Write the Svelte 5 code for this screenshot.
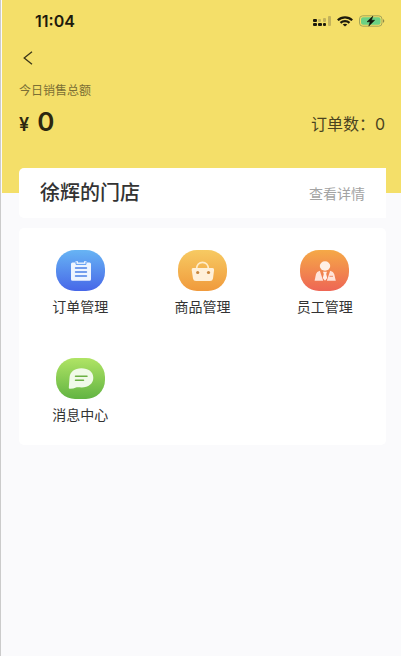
<script lang="ts">
    type Entry = { id: 'order' | 'goods' | 'staff' | 'message'; name: string };

    const entries: Entry[] = [
        { id: 'order', name: '订单管理' },
        { id: 'goods', name: '商品管理' },
        { id: 'staff', name: '员工管理' },
        { id: 'message', name: '消息中心' }
    ];

    let sales = $state(0);
    let orders = $state(0);
</script>

<div class="page">
    <header>
        <div class="status">
            <span class="time">11:04</span>
            <div class="signals">
                <svg width="18" height="11" viewBox="0 0 18 11">
                    <g fill="#1d1a0c">
                        <rect x="0" y="3" width="4" height="3" rx="1" />
                        <rect x="0" y="7" width="4" height="3" rx="1" />
                        <rect x="5" y="7" width="4" height="3" rx="1" />
                        <rect x="10" y="7" width="3" height="3" rx="1" />
                    </g>
                    <g fill="#c3b25a">
                        <rect x="5" y="3" width="3" height="3" rx="1" />
                        <rect x="10" y="2" width="3" height="4" rx="1" />
                        <rect x="15" y="0" width="3" height="10" rx="1" />
                    </g>
                </svg>
                <svg width="16" height="11" viewBox="0 0 16 11" fill="none" stroke="#1d1a0c" stroke-width="2.2">
                    <path d="M0.8 4.2C4.8 0.3 11.2 0.3 15.2 4.2" />
                    <path d="M3.5 6.9C6 4.6 10 4.6 12.5 6.9" />
                    <path d="M8 10.6L5.7 8.5C7 7.4 9 7.4 10.3 8.5Z" fill="#1d1a0c" stroke="none" />
                </svg>
                <svg width="26" height="12" viewBox="0 0 26 12">
                    <rect x="0.5" y="0.8" width="22.5" height="10.4" rx="3.2" fill="none" stroke="#a3a558" />
                    <rect x="2" y="2.2" width="19.5" height="7.6" rx="2" fill="#6bd184" />
                    <path d="M24 4.3C25.7 4.6 25.7 7.4 24 7.7Z" fill="#8f8a48" />
                    <path d="M13.8 1.2L8 6.8H11.2L9.8 11L15.6 5.3H12.4Z" fill="#14170c" stroke="#14170c" stroke-width="0.6" />
                </svg>
            </div>
        </div>

        <button class="back" aria-label="返回">
            <svg width="10" height="14" viewBox="0 0 10 14" fill="none" stroke="#3b3518" stroke-width="1.3">
                <path d="M9 0.8L1.2 7L9 13.2" />
            </svg>
        </button>

        <p class="caption">今日销售总额</p>
        <div class="totals">
            <p class="money"><span>¥</span>{sales}</p>
            <p class="orders">订单数：{orders}</p>
        </div>
    </header>

    <main>
        <section class="shop">
            <h1>徐辉的门店</h1>
            <a href="#detail">查看详情</a>
        </section>

        <nav>
            {#each entries as entry (entry.id)}
                <button class="entry">
                    <span class="icon {entry.id}">
                        <svg width="49" height="41" viewBox="0 0 49 41">
                            {#if entry.id === 'order'}
                                <path d="M16.5 12.5H19.5V11.3H22V12.5H28V11.3H30.5V12.5H33.5Q35 12.5 35 14V29.2Q35 30.7 33.5 30.7H16.5Q15 30.7 15 29.2V14Q15 12.5 16.5 12.5Z" fill="#eef5ff" />
                                <path d="M20 12V14.4H30V12" fill="none" stroke="#5b9bf3" stroke-width="1" />
                                <path d="M19.5 18H30.5M19.5 22H30.5M19.5 26H30.5" stroke="#4a80e8" stroke-width="1.4" stroke-linecap="round" />
                            {:else if entry.id === 'goods'}
                                <path d="M18.5 19.5C18.5 10 30.5 10 30.5 19.5" fill="none" stroke="#ffecc9" stroke-width="1.8" />
                                <path d="M15 18H34.5Q36.3 18 36.1 20L35 28.4Q34.6 31 32 31H18Q15.4 31 15 28.4L13.7 20Q13.5 18 15 18Z" fill="#fff0d9" />
                                <circle cx="19.7" cy="22.5" r="1.6" fill="#c8863c" />
                                <circle cx="30.5" cy="22.5" r="1.6" fill="#c8863c" />
                            {:else if entry.id === 'staff'}
                                <ellipse cx="25" cy="16" rx="5.2" ry="4.7" fill="#fff0e5" />
                                <path d="M19.8 20.8L23.2 30.8H14.6L16 24Q16.6 21.7 19.8 20.8Z" fill="#ffe3da" />
                                <path d="M30.2 20.8L26.8 30.8H35.8L34.2 24Q33.5 21.7 30.2 20.8Z" fill="#ffe3da" />
                                <path d="M23 21.8H27L26.2 24L27.2 28L25 30.8L22.8 28L23.8 24Z" fill="#fff0e9" />
                                <path d="M29.5 26.3H33" stroke="#ef8a67" stroke-width="1" />
                            {:else}
                                <path d="M14 30.8Q12.6 30.8 12.8 29.4L13.5 20C13.8 13.8 18.6 10.3 25.3 10.3C32.5 10.3 37.3 14 37.3 19.8C37.3 25.8 32.4 29.4 25.6 29.4C23.2 29.4 21.5 29 20 29.5Q17.5 30.8 14 30.8Z" fill="#f0fae8" />
                                <path d="M19.5 18.3H31M19.5 22.3H27.5" stroke="#6bb043" stroke-width="1.5" stroke-linecap="round" />
                            {/if}
                        </svg>
                    </span>
                    {entry.name}
                </button>
            {/each}
        </nav>
    </main>
</div>

<style>
    :global(body) {
        margin: 0;
        background: #fafafc;
    }

    .page {
        box-sizing: border-box;
        min-height: 100vh;
        border-left: 1px solid #cbcbcb;
        padding-left: 1px;
        background: #fafafc;
        font-family: 'Inter', 'Noto Sans CJK SC', sans-serif;
        color: #333;
    }

    p,
    h1 {
        margin: 0;
    }

    button {
        border: none;
        background: none;
        padding: 0;
        font-family: inherit;
        color: inherit;
        cursor: pointer;
    }

    header {
        padding: 12px 16px 51px 17px;
        background: #f4df69;
    }

    .status {
        display: flex;
        align-items: center;
        justify-content: space-between;
        height: 18px;
        padding-left: 16px;
    }

    .time {
        font-size: 16px;
        font-weight: 600;
        color: #1d1a0c;
    }

    .signals {
        display: flex;
        align-items: center;
        gap: 6px;
    }

    svg {
        display: block;
    }

    .back {
        display: block;
        padding: 21px 4px 16px;
    }

    .caption {
        font-size: 12px;
        line-height: 20px;
        color: #7b6f35;
    }

    .totals {
        display: flex;
        align-items: center;
        justify-content: space-between;
        margin-top: 4px;
        line-height: 34px;
    }

    .money {
        font-size: 26px;
        font-weight: 600;
        color: #2c2710;
    }

    .money span {
        margin-right: 8px;
        font-size: 18px;
    }

    .orders {
        font-size: 16px;
        color: #4a431f;
    }

    main {
        display: flex;
        flex-direction: column;
        gap: 10px;
        margin-top: -25px;
        padding: 0 15px 0 17px;
    }

    .shop {
        display: flex;
        align-items: center;
        justify-content: space-between;
        padding: 10px 21px;
        border-radius: 5px 0 0 5px;
        background: #fff;
    }

    h1 {
        font-size: 20px;
        font-weight: 500;
        line-height: 30px;
    }

    .shop a {
        font-size: 14px;
        color: #a3a3a3;
        text-decoration: none;
    }

    nav {
        display: grid;
        grid-template-columns: repeat(3, 1fr);
        row-gap: 41px;
        padding: 22px 0 20px;
        border-radius: 5px;
        background: #fff;
    }

    .entry {
        display: flex;
        flex-direction: column;
        align-items: center;
        gap: 6px;
        font-size: 14px;
        line-height: 20px;
    }

    .icon {
        border-radius: 19px;
    }

    .order {
        background: linear-gradient(#67b4f4, #4767e8);
    }

    .goods {
        background: linear-gradient(#f7ca62, #f09a3c);
    }

    .staff {
        background: linear-gradient(#f5a947, #ee6655);
    }

    .message {
        background: linear-gradient(#b0e465, #62b442);
    }
</style>
